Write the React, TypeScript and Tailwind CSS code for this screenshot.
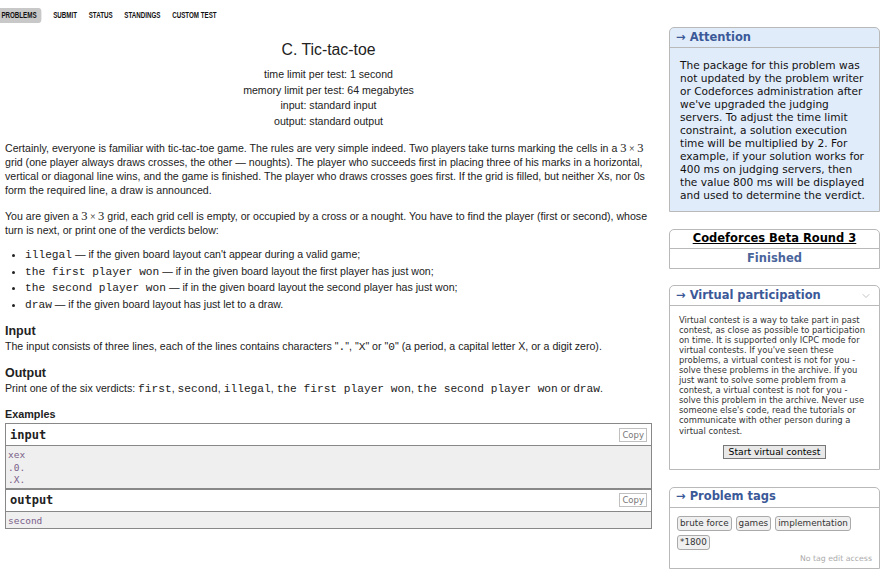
import { ChevronDown } from 'lucide-react';

const sans = { fontFamily: '"Liberation Sans", Arial, sans-serif' };
const verdana = { fontFamily: '"DejaVu Sans", Verdana, sans-serif' };
const courier = { fontFamily: '"Liberation Mono", "Courier New", monospace' };
const consolas = { fontFamily: '"DejaVu Sans Mono", Consolas, monospace' };

function Tt({ children }: { children: React.ReactNode }) {
  return (
    <span className="text-[11.2px]" style={courier}>
      {children}
    </span>
  );
}

function Times() {
  return (
    <span className="text-[12.5px] leading-none whitespace-nowrap" style={{ fontFamily: '"Liberation Serif", serif' }}>
      3<span className="text-[10px]"> × </span>3
    </span>
  );
}

function SideBox({ title, chevron, children }: { title?: string; chevron?: boolean; children: React.ReactNode }) {
  return (
    <div className="border border-[#b9b9b9] rounded-t-[5px] bg-white" style={verdana}>
      {title && (
        <div className="h-[20px] border-b border-[#b9b9b9] flex items-center justify-between px-[6px]">
          <span className="text-[11.5px] font-bold text-[#3b5998]">→ {title}</span>
          {chevron && <ChevronDown size={12} strokeWidth={1} className="text-[#888] mr-[1px]" />}
        </div>
      )}
      {children}
    </div>
  );
}

function Sample({ label, lines }: { label: string; lines: string[] }) {
  return (
    <div className="border border-[#888]">
      <div className="h-[22px] bg-white border-b border-[#888] flex items-center justify-between pl-[4px] pr-[4px]">
        <span className="text-[12px] font-bold text-[#222]" style={consolas}>
          {label}
        </span>
        <span
          className="border border-[#c0c0c0] text-[8.5px] text-[#777] px-[2px] h-[14px] leading-[12px]"
          style={verdana}
        >
          Copy
        </span>
      </div>
      <div className="bg-[#efefef] px-[2px] pt-[3px] pb-[1px] text-[9.5px] leading-[12.4px] text-[#7a628a]" style={consolas}>
        {lines.map((l, i) => (
          <div key={i}>{l}</div>
        ))}
      </div>
    </div>
  );
}

export default function App() {
  return (
    <div className="w-[890px] h-[578px] bg-white overflow-hidden text-[#222]" style={sans}>
      {/* menu */}
      <div className="h-[27px] pt-[8px]">
        <div
          className="flex items-center gap-[17px] text-[9px] font-bold text-[#111] origin-left scale-x-[0.69] w-max"
          style={sans}
        >
          <span className="bg-[#c8c8c8] rounded-r-[4px] pl-[2px] pr-[7px] h-[15px] flex items-center">PROBLEMS</span>
          <span>SUBMIT</span>
          <span>STATUS</span>
          <span>STANDINGS</span>
          <span>CUSTOM TEST</span>
        </div>
      </div>

      <div className="flex">
        {/* main column */}
        <div className="ml-[5px] w-[647px]">
          <div className="text-center pt-[13px]">
            <div className="text-[15.8px] leading-[20px]">C. Tic-tac-toe</div>
            <div className="text-[10.6px] leading-[15.5px] mt-[7px]">
              <div>time limit per test: 1 second</div>
              <div>memory limit per test: 64 megabytes</div>
              <div>input: standard input</div>
              <div>output: standard output</div>
            </div>
          </div>

          <div className="text-[10.6px] leading-[14px] mt-[12px]">
            <p>
              Certainly, everyone is familiar with tic-tac-toe game. The rules are very simple indeed. Two players take
              turns marking the cells in a <Times /> grid (one player always draws crosses, the other — noughts). The
              player who succeeds first in placing three of his marks in a horizontal, vertical or diagonal line wins,
              and the game is finished. The player who draws crosses goes first. If the grid is filled, but neither Xs,
              nor 0s form the required line, a draw is announced.
            </p>
            <p className="mt-[12px]">
              You are given a <Times /> grid, each grid cell is empty, or occupied by a cross or a nought. You have to
              find the player (first or second), whose turn is next, or print one of the verdicts below:
            </p>
            <ul className="mt-[10px] list-disc pl-[20px] leading-[15.6px]">
              <li>
                <Tt>illegal</Tt> — if the given board layout can't appear during a valid game;
              </li>
              <li>
                <Tt>the first player won</Tt> — if in the given board layout the first player has just won;
              </li>
              <li>
                <Tt>the second player won</Tt> — if in the given board layout the second player has just won;
              </li>
              <li>
                <Tt>draw</Tt> — if the given board layout has just let to a draw.
              </li>
            </ul>

            <div className="mt-[10px]">
              <div className="text-[12.5px] font-bold leading-[16px]">Input</div>
              <div>
                The input consists of three lines, each of the lines contains characters "<Tt>.</Tt>", "<Tt>X</Tt>" or
                "<Tt>0</Tt>" (a period, a capital letter X, or a digit zero).
              </div>
            </div>
            <div className="mt-[11px]">
              <div className="text-[12.5px] font-bold leading-[16px]">Output</div>
              <div>
                Print one of the six verdicts: <Tt>first</Tt>, <Tt>second</Tt>, <Tt>illegal</Tt>,{' '}
                <Tt>the first player won</Tt>, <Tt>the second player won</Tt> or <Tt>draw</Tt>.
              </div>
            </div>
          </div>

          <div className="mt-[11px]">
            <div className="text-[10.8px] font-bold leading-[14px] mb-[2px]">Examples</div>
            <Sample label="input" lines={['xex', '.0.', '.X.']} />
            <Sample label="output" lines={['second']} />
          </div>
        </div>

        {/* sidebar */}
        <div className="ml-[17px] w-[211px] flex flex-col">
          <div className="border border-[#b9b9b9] rounded-t-[5px] bg-[#e1ecfa]" style={verdana}>
            <div className="h-[20px] border-b border-[#b9b9b9] flex items-center px-[6px]">
              <span className="text-[11.5px] font-bold text-[#3b5998]">→ Attention</span>
            </div>
            <div className="px-[10px] pt-[11px] pb-[9px] text-[10.6px] leading-[13px] text-[#111]">
              The package for this problem was not updated by the problem writer or Codeforces administration after
              we've upgraded the judging servers. To adjust the time limit constraint, a solution execution time will
              be multiplied by 2. For example, if your solution works for 400 ms on judging servers, then the value 800
              ms will be displayed and used to determine the verdict.
            </div>
          </div>

          <div className="mt-[17px]">
            <SideBox>
              <div className="h-[19px] border-b border-[#b9b9b9] flex items-center justify-center text-[11.5px] font-bold underline text-black">
                Codeforces Beta Round 3
              </div>
              <div className="h-[19px] flex items-center justify-center text-[11.5px] font-bold text-[#4a659b]">
                Finished
              </div>
            </SideBox>
          </div>

          <div className="mt-[16px]">
            <SideBox title="Virtual participation" chevron>
              <div className="px-[9px] pt-[9px] pb-[10px]">
                <div className="text-[8.4px] leading-[10.05px] text-[#333]">
                  Virtual contest is a way to take part in past contest, as close as possible to participation on time.
                  It is supported only ICPC mode for virtual contests. If you've seen these problems, a virtual contest
                  is not for you - solve these problems in the archive. If you just want to solve some problem from a
                  contest, a virtual contest is not for you - solve this problem in the archive. Never use someone
                  else's code, read the tutorials or communicate with other person during a virtual contest.
                </div>
                <div className="flex justify-center mt-[9px]">
                  <span className="border border-[#777] bg-[#e8e8e8] text-[9.2px] leading-[12px] px-[5px] text-black">
                    Start virtual contest
                  </span>
                </div>
              </div>
            </SideBox>
          </div>

          <div className="mt-[17px]">
            <SideBox title="Problem tags">
              <div className="px-[7px] pt-[8px] pb-[4px]">
                <div className="flex flex-wrap gap-x-[4px] gap-y-[4px] text-[8.8px] text-[#333]">
                  {['brute force', 'games', 'implementation', '*1800'].map((t) => (
                    <span
                      key={t}
                      className="border border-[#aaa] bg-[#f0f0f0] rounded-[3px] px-[2px] h-[15px] leading-[13px]"
                    >
                      {t}
                    </span>
                  ))}
                </div>
                <div className="text-right text-[7.8px] text-[#aaa] mt-[3px]">No tag edit access</div>
              </div>
            </SideBox>
          </div>
        </div>
      </div>
    </div>
  );
}
